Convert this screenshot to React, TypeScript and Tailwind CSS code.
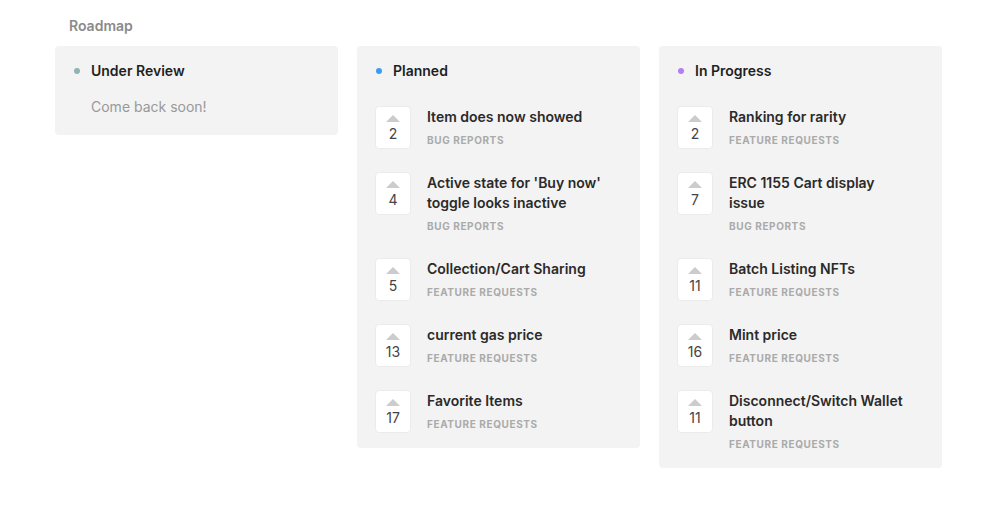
type Item = { title: string; category: string; votes: number };

type Column = { name: string; dot: string; items: Item[] };

const columns: Column[] = [
  { name: 'Under Review', dot: 'bg-[#8fb5b0]', items: [] },
  {
    name: 'Planned',
    dot: 'bg-[#3d9bf5]',
    items: [
      { title: 'Item does now showed', category: 'Bug Reports', votes: 2 },
      { title: "Active state for 'Buy now' toggle looks inactive", category: 'Bug Reports', votes: 4 },
      { title: 'Collection/Cart Sharing', category: 'Feature Requests', votes: 5 },
      { title: 'current gas price', category: 'Feature Requests', votes: 13 },
      { title: 'Favorite Items', category: 'Feature Requests', votes: 17 },
    ],
  },
  {
    name: 'In Progress',
    dot: 'bg-[#b57cf6]',
    items: [
      { title: 'Ranking for rarity', category: 'Feature Requests', votes: 2 },
      { title: 'ERC 1155 Cart display issue', category: 'Bug Reports', votes: 7 },
      { title: 'Batch Listing NFTs', category: 'Feature Requests', votes: 11 },
      { title: 'Mint price', category: 'Feature Requests', votes: 16 },
      { title: 'Disconnect/Switch Wallet button', category: 'Feature Requests', votes: 11 },
    ],
  },
];

function VoteBox({ votes }: { votes: number }) {
  return (
    <div className="flex h-[43px] w-[36px] shrink-0 flex-col items-center rounded border border-[#ebebeb] bg-white pt-[8px]">
      <svg width="14" height="7" viewBox="0 0 14 7">
        <path d="M7 0 L14 7 L0 7 Z" fill="#cccccc" />
      </svg>
      <span className="mt-[3px] text-[14px] leading-[18px] text-[#444]">{votes}</span>
    </div>
  );
}

function RoadmapItem({ item }: { item: Item }) {
  return (
    <div className="flex gap-4">
      <VoteBox votes={item.votes} />
      <div className="max-w-[182px] pt-px">
        <div className="text-[14px] font-semibold leading-5 text-[#2a2a2a]">{item.title}</div>
        <div className="mt-[3px] text-[10px] font-bold uppercase leading-5 tracking-[0.06em] text-[#aaaaaa]">
          {item.category}
        </div>
      </div>
    </div>
  );
}

export default function App() {
  return (
    <div className="min-h-screen bg-white pl-[55px] pt-[16px]" style={{ fontFamily: 'Inter, "Noto Sans", sans-serif' }}>
      <h2 className="pl-[14px] text-[14px] font-semibold leading-5 text-[#8a8a8a]">Roadmap</h2>

      <div className="mt-[10px] flex items-start gap-[19px]">
        {columns.map((col) => (
          <div key={col.name} className="w-[283px] rounded bg-[#f3f3f3] px-[18px] pb-[14px] pt-[15px]">
            <div className="flex items-center gap-[11px] pl-px">
              <span className={`h-[6px] w-[6px] rounded-full ${col.dot}`} />
              <span className="text-[14px] font-semibold leading-5 text-[#1f1f1f]">{col.name}</span>
            </div>

            {col.items.length === 0 ? (
              <p className="mb-[4px] mt-4 pl-[18px] text-[14px] leading-5 text-[#999]">Come back soon!</p>
            ) : (
              <div className="mt-[25px] flex flex-col gap-[22px]">
                {col.items.map((item) => (
                  <RoadmapItem key={item.title} item={item} />
                ))}
              </div>
            )}
          </div>
        ))}
      </div>
    </div>
  );
}
